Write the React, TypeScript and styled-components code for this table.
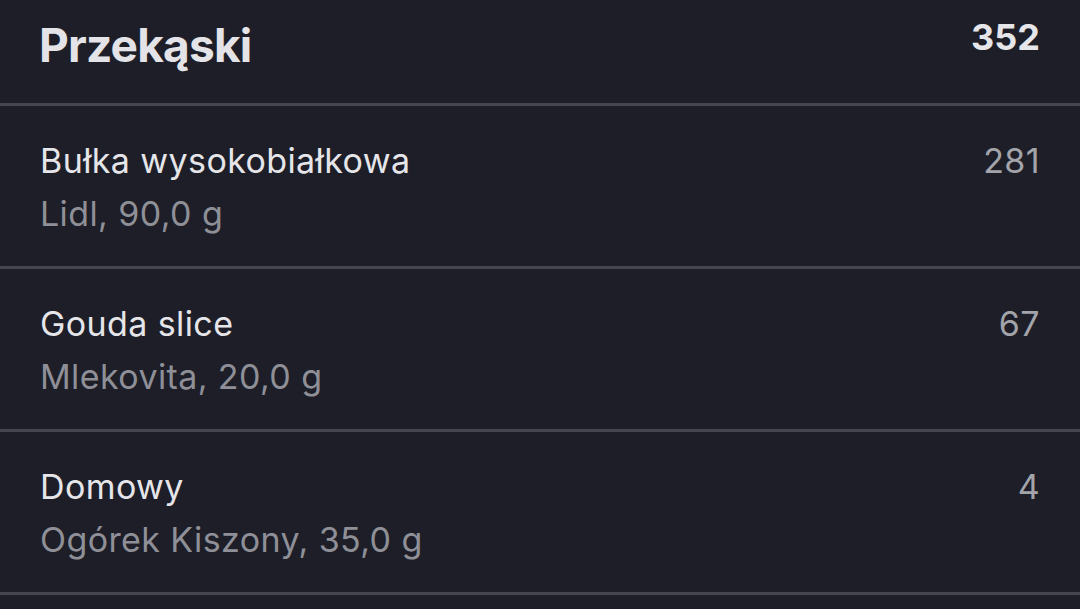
import React from "react"
import styled, { createGlobalStyle } from "styled-components"

const GlobalStyle = createGlobalStyle`
    html, body {
        margin: 0;
        padding: 0;
        background: #1d1e28;
    }
    body {
        font-family: Inter, "Noto Sans", "Liberation Sans", sans-serif;
        -webkit-font-smoothing: antialiased;
    }
`

const Page = styled.div`
    width: 1080px;
    height: 609px;
    overflow: hidden;
    background: #1d1e28;
`

const Header = styled.div`
    display: flex;
    justify-content: space-between;
    align-items: flex-start;
    height: 106px;
    box-sizing: border-box;
    padding: 19px 40px 0 39px;
    border-bottom: 3px solid #45464f;
`

const Title = styled.h1`
    margin: 3px 0 0;
    font-size: 46px;
    line-height: 1;
    font-weight: 700;
    letter-spacing: -0.8px;
    color: #e4e4e8;
`

const Total = styled.span`
    font-size: 36px;
    line-height: 1;
    font-weight: 700;
    color: #e6e6ea;
`

const Row = styled.div`
    display: flex;
    justify-content: space-between;
    align-items: flex-start;
    height: 163px;
    box-sizing: border-box;
    padding: 28px 40px 0 40px;
    border-bottom: 3px solid #45464f;
`

const Info = styled.div`
    display: flex;
    flex-direction: column;
`

const Text = styled.span<{ $tone: "main" | "muted" | "value" }>`
    font-size: 34px;
    line-height: 53px;
    letter-spacing: 0.4px;
    color: ${p => (p.$tone === "main" ? "#e6e6ea" : p.$tone === "muted" ? "#8f9097" : "#a3a4aa")};
`

const items = [
    { name: "Bułka wysokobiałkowa", details: "Lidl, 90,0 g", kcal: 281 },
    { name: "Gouda slice", details: "Mlekovita, 20,0 g", kcal: 67 },
    { name: "Domowy", details: "Ogórek Kiszony, 35,0 g", kcal: 4 },
]

export default function App() {
    return (
        <>
            <GlobalStyle />
            <Page>
                <Header>
                    <Title>Przekąski</Title>
                    <Total>352</Total>
                </Header>
                {items.map(item => (
                    <Row key={item.name}>
                        <Info>
                            <Text $tone="main">{item.name}</Text>
                            <Text $tone="muted">{item.details}</Text>
                        </Info>
                        <Text $tone="value">{item.kcal}</Text>
                    </Row>
                ))}
            </Page>
        </>
    )
}
